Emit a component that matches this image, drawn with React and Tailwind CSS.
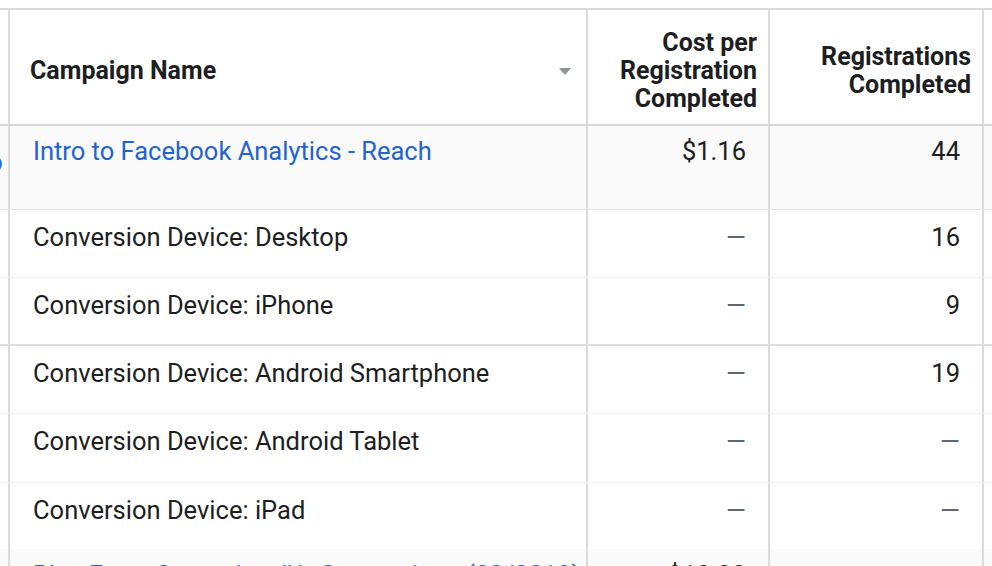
import React from 'react';

const rows = [
  { name: 'Conversion Device: Desktop', cost: null, reg: '16', h: 'h-[68px]', line: 'border-b border-[#f0f0f0]' },
  { name: 'Conversion Device: iPhone', cost: null, reg: '9', h: 'h-[68px]', line: 'border-b-2 border-[#dedede]' },
  { name: 'Conversion Device: Android Smartphone', cost: null, reg: '19', h: 'h-[68px]', line: 'border-b border-[#f0f0f0]' },
  { name: 'Conversion Device: Android Tablet', cost: null, reg: null, h: 'h-[69px]', line: 'border-b border-[#f0f0f0]' },
  { name: 'Conversion Device: iPad', cost: null, reg: null, h: 'h-[66px]', line: '' },
];

function Dash() {
  return <span className="text-[#606770]">—</span>;
}

export default function App() {
  return (
    <div className="w-[992px] h-[566px] overflow-hidden bg-white text-[#1c1e21] font-['Roboto',sans-serif]">
      <div className="mt-[8px] border-t-2 border-[#dadada]">
        {/* header */}
        <div className="flex h-[116px] border-b-2 border-[#d6d6d6]">
          <div className="w-[10px] shrink-0 border-r-2 border-[#dadada]" />
          <div className="w-[578px] shrink-0 border-r-2 border-[#dadada] flex items-center justify-between pl-[20px] pr-[15px] pt-[8px]">
            <span className="text-[25px] leading-[28px] font-bold">Campaign Name</span>
            <svg width="12" height="7" viewBox="0 0 12 7">
              <path d="M0 0 H12 L6 7 Z" fill="#8d949e" />
            </svg>
          </div>
          <div className="w-[182px] shrink-0 border-r-2 border-[#dadada] flex items-center justify-end pr-[11px] pt-[8px]">
            <span className="text-[25px] leading-[28px] font-bold text-right">Cost per<br />Registration<br />Completed</span>
          </div>
          <div className="w-[214px] shrink-0 border-r-2 border-[#dadada] flex items-center justify-end pr-[11px] pt-[8px]">
            <span className="text-[25px] leading-[28px] font-bold text-right">Registrations<br />Completed</span>
          </div>
          <div className="flex-1" />
        </div>

        {/* campaign row */}
        <div className="flex h-[84px] bg-[#fafafa] border-b border-[#e4e4e4] text-[25.5px] leading-[28px]">
          <div className="w-[10px] shrink-0 border-r-2 border-[#dadada] overflow-hidden pt-[29px]">
            <svg width="8" height="18" viewBox="0 0 8 18">
              <circle cx="-7" cy="9" r="9" fill="#1877f2" />
            </svg>
          </div>
          <div className="w-[578px] shrink-0 border-r-2 border-[#dadada] pl-[23px] pt-[11px] text-[#2362d1]">
            Intro to Facebook Analytics - Reach
          </div>
          <div className="w-[182px] shrink-0 border-r-2 border-[#dadada] pr-[22px] pt-[11px] text-right">$1.16</div>
          <div className="w-[214px] shrink-0 border-r-2 border-[#dadada] pr-[22px] pt-[11px] text-right">44</div>
          <div className="flex-1" />
        </div>

        {rows.map((r) => (
          <div key={r.name} className={`flex ${r.h} ${r.line} text-[25.5px] leading-[28px]`}>
            <div className="w-[10px] shrink-0 border-r-2 border-[#dadada]" />
            <div className="w-[578px] shrink-0 border-r-2 border-[#dadada] pl-[23px] pt-[13px]">{r.name}</div>
            <div className="w-[182px] shrink-0 border-r-2 border-[#dadada] pr-[22px] pt-[13px] text-right">
              {r.cost ? r.cost : <Dash />}
            </div>
            <div className="w-[214px] shrink-0 border-r-2 border-[#dadada] pr-[22px] pt-[13px] text-right">
              {r.reg ? r.reg : <Dash />}
            </div>
            <div className="flex-1" />
          </div>
        ))}

        {/* next campaign, cut off at the bottom of the view */}
        <div className="flex h-[60px] bg-[#fafafa] text-[25.5px] leading-[28px]">
          <div className="w-[10px] shrink-0 border-r-2 border-[#dadada]" />
          <div className="w-[578px] shrink-0 border-r-2 border-[#dadada] pl-[23px] pt-[12px] text-[#2362d1] whitespace-nowrap overflow-hidden">
            Blue Form Campaign #1: Conversions (03/2019)
          </div>
          <div className="w-[182px] shrink-0 border-r-2 border-[#dadada] pr-[22px] pt-[12px] text-right">$10.23</div>
          <div className="w-[214px] shrink-0 border-r-2 border-[#dadada] pr-[22px] pt-[12px] text-right"><Dash /></div>
          <div className="flex-1" />
        </div>
      </div>
    </div>
  );
}
